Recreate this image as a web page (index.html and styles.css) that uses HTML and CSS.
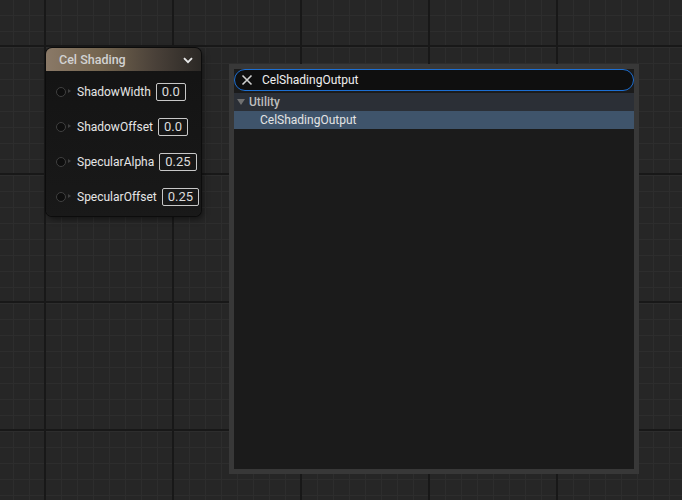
FILE: index.html
```html
<html lang="en">
<head>
    <meta charset="UTF-8">
    <meta name="viewport" content="width=device-width, initial-scale=1.0">
    <title>Material Graph</title>
    <link rel="stylesheet" href="styles.css">
</head>
<body>

    <div class="graph">

        <div class="node">
            <div class="node-header">
                <span>Cel Shading</span>
                <svg class="chevron" width="10" height="7" viewBox="0 0 10 7">
                    <path d="M1 1.2 L5 5.2 L9 1.2" fill="none" stroke="#e8e8e8" stroke-width="1.9"/>
                </svg>
            </div>
            <div class="node-body">
                <div class="pin-row">
                    <span class="pin"></span>
                    <span class="pin-label">ShadowWidth</span>
                    <span class="pin-value">0.0</span>
                </div>
                <div class="pin-row">
                    <span class="pin"></span>
                    <span class="pin-label">ShadowOffset</span>
                    <span class="pin-value">0.0</span>
                </div>
                <div class="pin-row">
                    <span class="pin"></span>
                    <span class="pin-label">SpecularAlpha</span>
                    <span class="pin-value">0.25</span>
                </div>
                <div class="pin-row">
                    <span class="pin"></span>
                    <span class="pin-label">SpecularOffset</span>
                    <span class="pin-value">0.25</span>
                </div>
            </div>
        </div>

        <div class="action-menu">
            <div class="search">
                <svg class="clear" width="12" height="12" viewBox="0 0 12 12">
                    <path d="M1.5 1.5 L10.5 10.5 M10.5 1.5 L1.5 10.5" stroke="#d0d0d0" stroke-width="1.6"/>
                </svg>
                <span>CelShadingOutput</span>
            </div>
            <div class="category">
                <span class="arrow"></span>
                <span>Utility</span>
            </div>
            <div class="item selected">CelShadingOutput</div>
        </div>

    </div>

</body>
</html>
```

FILE: styles.css
```css
body {
    margin: 0;
    font-family: Roboto, "Noto Sans", sans-serif;
    background-color: #262626;
}
.graph {
    position: relative;
    width: 682px;
    height: 500px;
    overflow: hidden;
    background-color: #262626;
    background-image:
        linear-gradient(to right, #181818 2px, transparent 2px),
        linear-gradient(to bottom, #181818 2px, transparent 2px),
        linear-gradient(to right, #2d2d2d 1px, transparent 1px),
        linear-gradient(to bottom, #2d2d2d 1px, transparent 1px);
    background-size: 128px 128px, 128px 128px, 16px 16px, 16px 16px;
    background-position: 44px 0, 0 45px, 13px 0, 0 15px;
}

/* node */
.node {
    position: absolute;
    left: 46px;
    top: 48px;
    width: 155px;
    height: 168px;
    border-radius: 6px;
    background: linear-gradient(to bottom, #131313, #191919);
    box-shadow: 0 0 0 1px #0c0c0c, 2px 3px 6px rgba(0,0,0,0.5);
    overflow: hidden;
}
.node-header {
    height: 23px;
    display: flex;
    align-items: center;
    justify-content: space-between;
    padding: 0 8px 0 13px;
    background: linear-gradient(to right, #8a7967 0%, #74654f 35%, #4a4139 70%, #2b2825 100%);
    color: #d2d2d2;
    font-size: 12.5px;
    font-weight: 500;
}
.node-header .chevron {
    margin-top: 1px;
}
.node-body {
    padding-top: 3px;
}
.pin-row {
    height: 35px;
    display: flex;
    align-items: center;
    padding-left: 10px;
    color: #e6e6e6;
    font-size: 12px;
}
.pin {
    position: relative;
    width: 8px;
    height: 8px;
    border: 1px solid #404040;
    border-radius: 50%;
    background: #0e0e0e;
    margin-right: 11px;
}
.pin::after {
    content: "";
    position: absolute;
    left: 11px;
    top: 1.5px;
    border-left: 3px solid #404040;
    border-top: 2.5px solid transparent;
    border-bottom: 2.5px solid transparent;
}
.pin-value {
    margin-left: 5px;
    height: 16px;
    line-height: 16px;
    padding: 0 5px;
    border: 1px solid #c8c8c8;
    border-radius: 2px;
    color: #dcdcdc;
    font-size: 13px;
}

/* action menu */
.action-menu {
    position: absolute;
    left: 229px;
    top: 64px;
    width: 400px;
    height: 400px;
    border: 5px solid #383838;
    background: #1b1b1b;
}
.search {
    height: 20px;
    display: flex;
    align-items: center;
    border: 1.5px solid #1d6fd2;
    border-radius: 11px;
    background: #0f0f0f;
    color: #f0f0f0;
    font-size: 12px;
    padding-left: 6px;
}
.search .clear {
    margin-right: 9px;
}
.category {
    margin-top: 2px;
    height: 18px;
    display: flex;
    align-items: center;
    background: #2b2f36;
    color: #bdbdbd;
    font-size: 12px;
    font-weight: 500;
    padding-left: 3px;
}
.category .arrow {
    width: 0;
    height: 0;
    border-top: 6px solid #707070;
    border-left: 4.5px solid transparent;
    border-right: 4.5px solid transparent;
    margin-right: 4px;
}
.item {
    height: 18px;
    line-height: 18px;
    padding-left: 26px;
    color: #e4e4e4;
    font-size: 12px;
}
.item.selected {
    background: #3f546b;
}
```
